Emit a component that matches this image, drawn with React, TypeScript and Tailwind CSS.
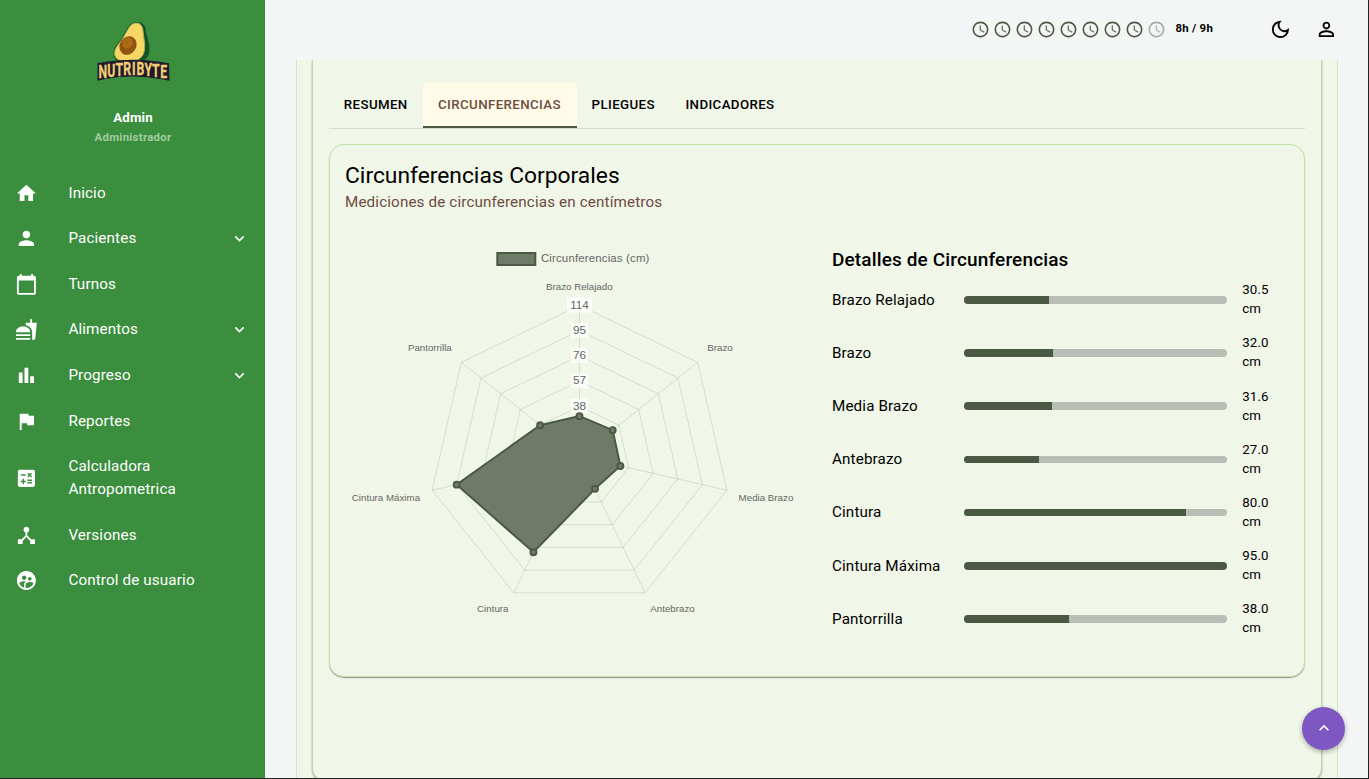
import React from "react";
import {
  MdHome,
  MdPerson,
  MdCalendarToday,
  MdFastfood,
  MdBarChart,
  MdFlag,
  MdCalculate,
  MdDeviceHub,
  MdSupervisedUserCircle,
  MdExpandMore,
  MdKeyboardArrowUp,
  MdOutlineDarkMode,
  MdPersonOutline,
} from "react-icons/md";
import type { IconType } from "react-icons";

type NavItem = { label: string; icon: IconType; expandable?: boolean };

const NAV: NavItem[] = [
  { label: "Inicio", icon: MdHome },
  { label: "Pacientes", icon: MdPerson, expandable: true },
  { label: "Turnos", icon: MdCalendarToday },
  { label: "Alimentos", icon: MdFastfood, expandable: true },
  { label: "Progreso", icon: MdBarChart, expandable: true },
  { label: "Reportes", icon: MdFlag },
  { label: "Calculadora Antropometrica", icon: MdCalculate },
  { label: "Versiones", icon: MdDeviceHub },
  { label: "Control de usuario", icon: MdSupervisedUserCircle },
];

const MEASURES = [
  { label: "Brazo Relajado", value: 30.5 },
  { label: "Brazo", value: 32.0 },
  { label: "Media Brazo", value: 31.6 },
  { label: "Antebrazo", value: 27.0 },
  { label: "Cintura", value: 80.0 },
  { label: "Cintura Máxima", value: 95.0 },
  { label: "Pantorrilla", value: 38.0 },
];

const WORD_SCALE = 0.7;
const WORD_XS = [8.8, 17.4, 25.2, 33.2, 39.9, 46.3, 54.2, 61.8, 69.8];
const WORD_YS = [58.2, 56.8, 55.8, 55.1, 54.9, 55.1, 55.8, 56.8, 58.2];

function Logo() {
  return (
    <svg width="78" height="64" viewBox="0 0 78 64" className="block">
      <path
        d="M40 2.500C46 .8 51.500 4 52 11c.3 5 3.500 10 3.500 18 0 8-5 13-12 13H27C21 41 18.500 36 20 30c1-4.500 5-7.500 8-12.500 2-3.500 3.500-6.500 5-9 1.500-3 4-5.200 7-6z"
        fill="#17502c"
      />
      <path
        d="M40 3.500C45 2 48.500 5 49 11c.3 5 2 11 1.500 18-.6 8-6 12-13 12h-8C22.500 40.500 19.500 36 21 30.500c1.300-4.500 5-7.500 8-12.500 2-3.500 3.500-6 5-8.700 1.600-3.100 3.500-5 6-5.800z"
        fill="#f6d766"
        stroke="#a9b64a"
        strokeWidth="1"
      />
      <ellipse cx="34" cy="25.600" rx="8.200" ry="9.600" transform="rotate(33 34 25.600)" fill="#8f5510" />
      <ellipse cx="33.500" cy="23" rx="5" ry="6" transform="rotate(40 33.500 23)" fill="#ab6a16" />
      <path
        d="M3.500 43Q8 42.800 12 41.700 39 38 66 41.700 71 42.800 75 43.200L75.500 60.800 68 59.300Q39 54 11 59 7 60 3.500 60.800z"
        fill="#1f1a2e"
      />
      <text
        transform={`scale(${WORD_SCALE} 1)`}
        x={WORD_XS.map((x) => x / WORD_SCALE).join(" ")}
        y={WORD_YS.join(" ")}
        textAnchor="middle"
        fontSize="17.500"
        fontWeight="700"
        fontFamily="Roboto, sans-serif"
        fill="#f2cf72"
        stroke="#f2cf72"
        strokeWidth="0.300"
      >
        NUTRIBYTE
      </text>
    </svg>
  );
}

function Sidebar() {
  return (
    <aside className="flex h-full w-[265px] shrink-0 flex-col bg-[#3a8e3d] text-white">
      <div className="flex h-[170.3px] shrink-0 flex-col items-center pt-[20px]">
        <Logo />
        <div className="mt-[24px] ml-px text-[13.3px] leading-[19px] font-bold tracking-[0.13px]">Admin</div>
        <div className="mt-px ml-px text-[11.4px] leading-[19px] font-bold tracking-[0.28px] text-[#a3cca0]">
          Administrador
        </div>
      </div>
      <nav className="flex flex-col">
        {NAV.map(({ label, icon: Icon, expandable }) => (
          <div key={label} className="flex items-center py-[11.4px] pr-[16.2px] pl-[15.2px]">
            <Icon size={22.8} className="shrink-0" />
            <span className="ml-[30.4px] w-[150px] text-[15.2px] leading-[22.8px] tracking-[0.143px]">
              {label}
            </span>
            {expandable && <MdExpandMore size={19} className="ml-auto shrink-0" />}
          </div>
        ))}
      </nav>
    </aside>
  );
}

function Clock({ active }: { active: boolean }) {
  return (
    <svg width="19" height="19" viewBox="0 0 24 24" className={active ? "text-[#4b5942]" : "text-[#a8aaa8]"}>
      <path
        fill="currentColor"
        d="M11.990 2C6.470 2 2 6.480 2 12s4.470 10 9.990 10C17.520 22 22 17.520 22 12S17.520 2 11.990 2zM12 20c-4.420 0-8-3.580-8-8s3.580-8 8-8 8 3.580 8 8-3.580 8-8 8z"
      />
      <path fill="currentColor" opacity="0.9" d="M12.500 7H11v6l5.250 3.150.75-1.230-4.500-2.670z" />
    </svg>
  );
}

function Header() {
  return (
    <header className="flex h-[60px] shrink-0 items-center justify-end pr-[30px]">
      <div className="mb-[1.5px] flex items-center gap-[2.95px]">
        {Array.from({ length: 9 }, (_, i) => (
          <Clock key={i} active={i < 8} />
        ))}
      </div>
      <span className="mb-[4px] ml-[9.5px] w-[39px] text-[11.4px] leading-[19px] font-bold whitespace-nowrap tracking-[0.28px]">
        8h / 9h
      </span>
      <MdOutlineDarkMode size={22.8} className="mb-px ml-[55px]" />
      <MdPersonOutline size={22.8} className="mb-px ml-[23px]" />
    </header>
  );
}

const CX = 239.5;
const CY = 216.6;
const R = 151.2;
const MAX = 114;

function polar(i: number, value: number): [number, number] {
  const a = (i * 2 * Math.PI) / 7 - Math.PI / 2;
  const r = (value / MAX) * R;
  return [CX + r * Math.cos(a), CY + r * Math.sin(a)];
}

const toPoints = (values: number[]) => values.map((v, i) => polar(i, v).join(",")).join(" ");

const LABELS: { text: string; x: number; y: number; anchor: "start" | "middle" | "end" }[] = [
  { text: "Brazo Relajado", x: 239.3, y: 50.3, anchor: "middle" },
  { text: "Brazo", x: 367.3, y: 111.4, anchor: "start" },
  { text: "Media Brazo", x: 398.6, y: 261.2, anchor: "start" },
  { text: "Antebrazo", x: 310.3, y: 372.2, anchor: "start" },
  { text: "Cintura", x: 168.5, y: 372.2, anchor: "end" },
  { text: "Cintura Máxima", x: 80.1, y: 261.2, anchor: "end" },
  { text: "Pantorrilla", x: 111.8, y: 111.4, anchor: "end" },
];

function RadarChart() {
  const values = MEASURES.map((m) => m.value);
  return (
    <svg
      width="472"
      height="390"
      viewBox="0 0 472 390"
      className="block"
      fontFamily="'Liberation Sans', Arial, sans-serif"
      fill="#666666"
    >
      <rect x="157.300" y="13" width="38" height="12" fill="#6f7b67" stroke="#4b5942" strokeWidth="2" />
      <text x="200.900" y="22.300" fontSize="11.400" textLength="108.500">
        Circunferencias (cm)
      </text>
      {[19, 38, 57, 76, 95, 114].map((t) => (
        <polygon key={t} points={toPoints(Array(7).fill(t))} fill="none" stroke="#000" strokeOpacity="0.1" />
      ))}
      {values.map((_, i) => {
        const [x, y] = polar(i, MAX);
        return <line key={i} x1={CX} y1={CY} x2={x} y2={y} stroke="#000" strokeOpacity="0.1" />;
      })}
      {LABELS.map((l) => (
        <text key={l.text} x={l.x} y={l.y} textAnchor={l.anchor} fontSize="9.750">
          {l.text}
        </text>
      ))}
      {[38, 57, 76, 95, 114].map((t) => {
        const y = CY - (t / MAX) * R;
        const w = t > 99 ? 24.8 : 17.6;
        return (
          <g key={t}>
            <rect x={CX - w / 2} y={y - 7.6} width={w} height="14.800" fill="#fff" fillOpacity="0.75" />
            <text x={CX} y={y + 3.3} textAnchor="middle" fontSize="11.700">
              {t}
            </text>
          </g>
        );
      })}
      <polygon points={toPoints(values)} fill="#6f7b67" stroke="#4b5942" strokeWidth="2" />
      {values.map((v, i) => {
        const [x, y] = polar(i, v);
        return <circle key={i} cx={x} cy={y} r="3" fill="#6f7b67" stroke="#4b5942" strokeWidth="1.900" />;
      })}
    </svg>
  );
}

function Details() {
  const max = Math.max(...MEASURES.map((m) => m.value));
  return (
    <section className="w-[444px] pt-[5px]">
      <h3 className="text-[19px] leading-[30.4px] font-medium tracking-[0.14px]">Detalles de Circunferencias</h3>
      <ul className="mt-[5.6px] flex flex-col gap-[15.2px]">
        {MEASURES.map((m) => (
          <li key={m.label} className="flex h-[38px] items-center">
            <span className="w-[132.3px] shrink-0 text-[15.2px] leading-[22.8px] tracking-[0.143px]">{m.label}</span>
            <div className="mb-[0.4px] h-[7.6px] w-[263px] shrink-0 overflow-hidden rounded-full bg-[#b8beb5]">
              <div className="h-full bg-[#4b5942]" style={{ width: `${(m.value / max) * 100}%` }} />
            </div>
            <span className="mb-[1.5px] ml-[14.9px] w-[30px] text-[13.3px] leading-[19px] tracking-[0.14px]">
              {m.value.toFixed(1)} cm
            </span>
          </li>
        ))}
      </ul>
    </section>
  );
}

const TABS = [
  { label: "RESUMEN", box: "w-[93.5px]" },
  { label: "CIRCUNFERENCIAS", box: "w-[154px]", active: true },
  { label: "PLIEGUES", box: "w-[93.5px]" },
  { label: "INDICADORES", box: "w-[120px]" },
];

export default function App() {
  return (
    <div className="relative flex h-[779px] w-[1369px] overflow-hidden border-r border-b border-[#222426] bg-[#f4f6f6] font-['Roboto',sans-serif] text-black">
      <Sidebar />
      <div className="flex h-full min-w-0 flex-1 flex-col">
        <Header />
        <main className="min-h-0 flex-1 overflow-hidden pr-[30px] pl-[31px]">
          <div className="h-[900px] border-x border-[#d2e8bb] bg-[#f0f6e8] px-[15px]">
            <div className="h-[722px] rounded-b-[14px] border border-t-0 border-[#bfd8a4] bg-[#f0f6e8] px-[16px] pt-[22.5px] shadow-[0_1px_2px_rgba(0,0,0,0.35)]">
              <div className="flex h-[46.5px] border-b border-[#d5ddcf]">
                {TABS.map((t) => (
                  <div
                    key={t.label}
                    className={`${t.box} flex h-[45.5px] shrink-0 items-center justify-center text-[13.3px] leading-[16.6px] font-medium tracking-[0.38px] ${
                      t.active ? "rounded-t-[4px] border-b-2 border-[#4b5942] bg-[#fffbe8] pt-[2.2px] text-[#6d4c41]" : "pt-[0.2px]"
                    }`}
                  >
                    {t.label}
                  </div>
                ))}
              </div>
              <div className="mt-[15px] h-[533px] rounded-[15px] border border-[#c5e1a5] px-[15px] pt-[15.5px] shadow-[0_1px_1px_rgba(0,0,0,0.4)]">
                <h2 className="text-[22.8px] leading-[30.4px]">Circunferencias Corporales</h2>
                <p className="text-[15.2px] leading-[22.8px] tracking-[0.143px] text-[#6d4c41]">
                  Mediciones de circunferencias en centímetros
                </p>
                <div className="mt-[26.3px] -ml-[5px] flex gap-[20px]">
                  <RadarChart />
                  <Details />
                </div>
              </div>
            </div>
          </div>
        </main>
      </div>
      <button
        aria-label="Subir"
        className="absolute top-[706.5px] left-[1302px] flex h-[43px] w-[43px] items-center justify-center rounded-full bg-[#7e57c2] text-white shadow-[0_2px_5px_rgba(0,0,0,0.3)]"
      >
        <MdKeyboardArrowUp size={20} />
      </button>
    </div>
  );
}
